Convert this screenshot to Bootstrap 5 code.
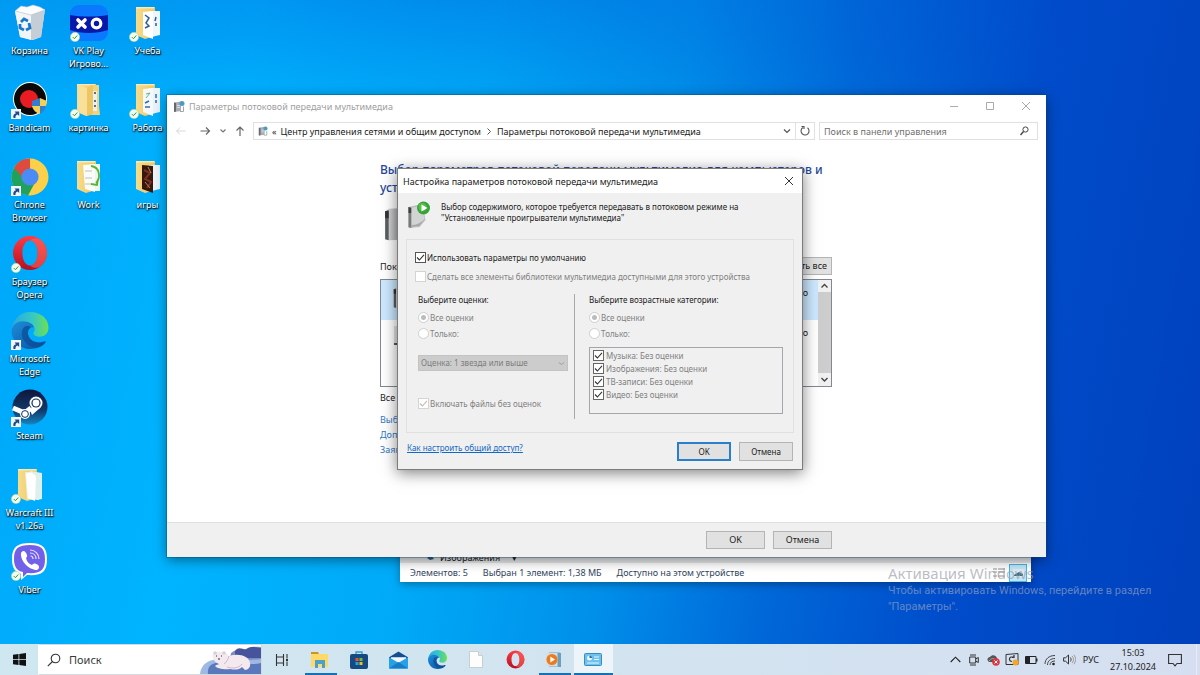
<!DOCTYPE html>
<html lang="ru">
<head>
<meta charset="utf-8">
<meta name="viewport" content="width=device-width, initial-scale=1">
<title>Рабочий стол</title>
<link href="https://cdn.jsdelivr.net/npm/bootstrap@5.3.0/dist/css/bootstrap.min.css" rel="stylesheet">
<style>
:root{--ui:"Noto Sans","Open Sans",sans-serif}
body{font-family:var(--ui);font-size:9px;line-height:13px;color:#1b1b1b;overflow:hidden}
svg{display:block;flex:none}
button,input,select{font-family:inherit}
.desktop{min-height:100vh;background:
 radial-gradient(ellipse 60% 22% at 38% -4%,rgba(0,60,200,.35),transparent),
 linear-gradient(100deg,#00a6f8 0%,#00b4ff 20%,#00aaf8 38%,#0090ea 53%,#0068d8 66%,#004cca 80%,#0040bc 100%)}
/* desktop shortcuts */
.shortcut{width:59px;height:77px;color:#fff;text-decoration:none;text-align:center;text-shadow:0 1px 2px #000,1px 1px 1px rgba(0,0,0,.8)}
.shortcut .pic{position:relative;width:38px;height:38px;margin:0 auto 2px}
.shortcut .mark-sm{position:absolute;left:0;bottom:0}
/* windows */
.win{position:absolute;background:#fff}
.w-back{left:400px;right:169px;top:540px;box-shadow:0 2px 8px rgba(0,0,0,.35)}
.w-main{left:167px;right:154px;top:95px;box-shadow:0 0 0 1px rgba(0,70,120,.35),0 3px 12px rgba(0,0,0,.45)}
.w-dialog{left:230px;top:73px;width:406px;border:1px solid #7c7c7c;background:#f0f0f0;box-shadow:0 3px 14px rgba(0,0,0,.5);font-size:8px;line-height:11px}
.capt{height:22px;color:#a0a0a0;padding:0 2px 0 6px}
.capbtn{width:36px;height:22px;border:0;padding:0;background:none;color:#999}
.navrow{height:28px}
.iconbtn{border:0;padding:0;background:none}
.box{height:18px;border:1px solid #e0e0e0}
.searchbox{width:219px}
.box input{border:0;outline:0;font-size:9px;padding:0}
.box input::placeholder{color:#6f6f6f;opacity:1}
.content{margin-left:213px;width:452px;height:377px}
.heading{font-size:12px;line-height:18px;color:#27479b;white-space:nowrap}
.devhead{margin:14px 0 4px}
.wbtn{height:18px;padding:0;border:1px solid #b4b4b4;background:#e1e1e1;font-size:9px;line-height:14px;color:#1b1b1b}
.footbar{background:#f0f0f0;border-top:1px solid #dfdfdf;height:35px;padding:8px 214px 0 0}
.w-58{width:59px}
.devlist{height:108px;border:1px solid #828790}
.devrow{height:40px;padding:6px 10px 0 8px}
.devrow.sel{background:#cce8ff}
.vscroll{width:13px;background:#f0f0f0}
.thumb{background:#cdcdcd}
.devlinks a{display:block;line-height:15px;color:#2f7ac4;text-decoration:none}
/* dialog */
.dtitle{height:24px;background:#fff;font-size:9px;padding-left:5px}
.groupbox{border:1px solid #e0e0e0;margin:10px 8px 0;height:194px;padding:12px 10px 0 8px}
.opt{height:11px;gap:1px}
.off{color:#808080}
.cb,.rb{appearance:none;margin:0;flex:none;width:11px;height:11px;background:#fff no-repeat center/9px;border:1px solid #555}
.cb:checked{background-image:url("data:image/svg+xml,%3Csvg xmlns='http://www.w3.org/2000/svg' viewBox='0 0 9 9'%3E%3Cpath d='M1 4.5 3.4 7 8 1.8' fill='none' stroke='%23333' stroke-width='1.1'/%3E%3C/svg%3E")}
.cb.dim{border-color:#d4d4d4}
.cb.dim:checked{background-image:url("data:image/svg+xml,%3Csvg xmlns='http://www.w3.org/2000/svg' viewBox='0 0 9 9'%3E%3Cpath d='M1 4.5 3.4 7 8 1.8' fill='none' stroke='%23bbb' stroke-width='1.1'/%3E%3C/svg%3E")}
.rb{border-radius:50%;border-color:#cfcfcf}
.rb:checked{background:radial-gradient(circle,#bcbcbc 0 2px,#fff 3px)}
.colL{width:161px;height:125px;padding-left:3px;border-right:1px solid #a9a9a9}
.colR{padding-left:14px}
.radios{display:flex;flex-direction:column;gap:5px;margin-top:7px}
.stars{width:150px;height:16px;margin:16px 0 27px;border:1px solid #c3c3c3;background:#ccc url("data:image/svg+xml,%3Csvg xmlns='http://www.w3.org/2000/svg' viewBox='0 0 8 8'%3E%3Cpath d='M1 3l3 2 3-2' fill='none' stroke='%23999'/%3E%3C/svg%3E") no-repeat right 2px center/7px;appearance:none;font-size:8px;line-height:12px;padding:0 2px;color:#7c7c7c;opacity:1}
.catlist{width:194px;height:67px;border:1px solid #a3a6ab;padding:1px 0 0 3px}
.catlist .opt{height:13px;gap:2px}
.catlist .cb{border-color:#666}
.dlg-foot{padding:9px 9px 8px 9px}
.dlg-foot .wbtn{width:54px;height:19px;font-size:8px}
.dlg-foot a{color:#1268c4}
.wbtn.primary{border:2px solid #2a7fcb}
/* status */
.statusbar{height:19px;color:#31445c;padding-left:10px;gap:15px}
.strip{height:23px;background:#e9ebec;padding:11px 0 0 26px;line-height:13px}
.viewon{width:18px;height:18px;background:#bfe6f8;border:1px solid #49b4e6}
/* activation notice */
.notice{position:absolute;left:888px;top:563px;width:280px;color:rgba(160,172,196,.62);pointer-events:none;font-family:Roboto,sans-serif;font-size:11px;line-height:16px}
.notice h2{font-family:var(--ui);font-size:15px;line-height:20px;font-weight:400;margin:0;color:rgba(150,155,165,.66)}
/* taskbar */
.taskbar{position:absolute;left:0;right:0;bottom:0;height:31px;background:linear-gradient(90deg,#cfe7f1,#d2e4ef 50%,#d5dff1)}
.start{width:38px;border:0;background:none;padding:0}
.search{width:224px;background:#fff;border:1px solid #d4dadd;border-left-color:#fff}
.search input{border:0;outline:0;font-size:11px;width:100px;padding:0}
.search input::placeholder{color:#3a3a3a;opacity:1}
.app{width:39px;height:31px;border:0;background:none;padding:0 1px 0 0;position:relative}
.app.run::after{content:"";position:absolute;left:4px;right:3px;bottom:0;height:2px;background:#1470b8}
.app.act{background:#edf5fa}
.app.act::after{left:0;right:0}
.tray{color:#222;font-size:9px}
.tray .slot{width:19px;border:0;background:none;padding:0;color:#222}
.tray time{line-height:14px;margin:0 12px 0 11px}
.peek{width:4px;margin-left:14px}
</style>
</head>
<body>
<svg width="0" height="0" class="position-absolute" aria-hidden="true">
 <defs>
  <linearGradient id="gFold" x1="0" x2="1"><stop offset="0" stop-color="#f7dc8b"/><stop offset="1" stop-color="#efc75e"/></linearGradient>
  <linearGradient id="gOp" x1="0" y1="0" x2="0" y2="1"><stop offset="0" stop-color="#ff3b45"/><stop offset="1" stop-color="#b50f20"/></linearGradient>
  <linearGradient id="gE1" x1="0" y1="0" x2="1" y2="0"><stop offset="0" stop-color="#28a8e0"/><stop offset=".55" stop-color="#35c7c8"/><stop offset="1" stop-color="#6fe04f"/></linearGradient>
  <linearGradient id="gE2" x1="0" y1="0" x2="1" y2="1"><stop offset="0" stop-color="#1b8fdb"/><stop offset="1" stop-color="#0b4f9e"/></linearGradient>
  <linearGradient id="gSt" x1="0" y1="0" x2="0" y2="1"><stop offset="0" stop-color="#10163c"/><stop offset=".6" stop-color="#103a6c"/><stop offset="1" stop-color="#1585c2"/></linearGradient>
  <linearGradient id="gDev" x1="0" x2="1"><stop offset="0" stop-color="#e2e3e3"/><stop offset="1" stop-color="#7e8081"/></linearGradient>
  <symbol id="ok" viewBox="0 0 10 10"><circle cx="5" cy="5" r="4.7" fill="#f3fbef" stroke="#9fcf8f" stroke-width=".5"/><path d="M2.8 5.1 4.4 6.7 7.3 3.5" fill="none" stroke="#2f9a3d" stroke-width="1"/></symbol>
  <symbol id="lnk" viewBox="0 0 10 10"><path d="M0 0h10v10H0z" fill="#f2f6fb"/><path d="M2.4 9C1.900 6 3 4.600 5 4.200L3.600 2.500H8.200V7L6.600 5.500C4.900 6 4.300 7.200 4.500 9z" fill="#1f4a8a"/></symbol>
  <symbol id="folder" viewBox="0 0 38 38"><path d="M7 3h19v29l-10 3-9-4z" fill="url(#gFold)"/><path d="M7 3h18v1.500H7z" fill="#fbe9ae"/></symbol>
  <symbol id="opera" viewBox="0 0 36 36"><path fill="url(#gOp)" fill-rule="evenodd" d="M18 1a17 17 0 1 0 0 34 17 17 0 0 0 0-34zm0 4.500c4.600 0 7.600 5.500 7.600 12.500S22.600 30.500 18 30.500 10.400 25 10.400 18 13.400 5.500 18 5.500z"/><path d="M18 5.500c3-3 8-3 11-.500 8 7 8 19 0 26-3 2.500-8 2.500-11-.500 4.600 0 7.600-5.500 7.600-12.500S22.600 5.500 18 5.500z" fill="#ff6a5e" opacity=".55"/></symbol>
  <symbol id="edge" viewBox="0 0 36 36"><path d="M0 18C1 7 9 0 18 0c11 0 18 7 18 15 0 6-4 9-9 9-4 0-7-2-5-5 1.500-2 0-5-2-7-5-4-16-3-20 6z" fill="url(#gE1)"/><path d="M0 18c1-6 6-9 11-9 6 0 10 3 11 6-3-1-6 1-6 5 0 7 7 11 14 9 3-1 4-1 3 1-3 4-9 6-15 6C8 36 0 28 0 18z" fill="url(#gE2)"/><path d="M13 14c-4 3-4 10 0 15 3 4 8 6 12 5 4-1 7-3 8-5-5 3-16 1-17-8 0-3 1-5 3-6-1-1-3-2-6-1z" fill="#0d4c96" opacity=".7"/></symbol>
  <symbol id="server" viewBox="0 0 24 30"><path d="M1 4 4 2l18-1v27L5 29l-4-1z" fill="url(#gDev)"/><path d="M1 4 4 3v26l-3-1z" fill="#5b5d5f"/><path d="M1 4h3v6H1z" fill="#333"/></symbol>
  <symbol id="stream" viewBox="0 0 12 12"><path d="M1 2 8 1v9.500L1 11.500z" fill="#a9adb1"/><path d="M1 2l2 .5V11l-2 .5z" fill="#66696d"/><path d="M4 5h3M4 7h3" stroke="#eef" stroke-width=".7"/><circle cx="9" cy="3" r="2.500" fill="#4b9dc0"/><path d="M7 11h3.500V6" fill="none" stroke="#9aa6ae"/></symbol>
 </defs>
</svg>

<main class="desktop position-relative overflow-hidden">
 <nav class="d-flex pt-1" aria-label="Ярлыки">
  <div>
   <a class="shortcut d-block" href="#"><div class="pic"><svg width="38" height="38" viewBox="0 0 38 38"><path d="M4 7 34 5 30 33 22 36 9 33z" fill="#dfe5ea"/><path d="M4 7 20 9 20 36 9 33z" fill="#f2f5f7"/><path d="M20 9 34 5 30 33 20 36z" fill="#c5ced6"/><path d="M4 7l6-5 6 1 6-2 7 2 5 3-14 5z" fill="#fafcfd" stroke="#b4bfc8" stroke-width=".6"/><path d="M10 18l3-3 4 2M18 19l1 5-4 2M13 26l-4-2 0-4" fill="none" stroke="#1b78c8" stroke-width="2.800"/></svg></div>Корзина</a>
   <a class="shortcut d-block" href="#"><div class="pic"><svg width="38" height="38" viewBox="0 0 38 38"><circle cx="19" cy="18" r="17" fill="#fff"/><circle cx="19" cy="18" r="16" fill="#090909"/><circle cx="18" cy="18" r="9" fill="#e81c22"/><path d="M21 20l8-3v8h-8z" fill="#2f7fd0"/><path d="M29 17l7 3-1 5h-6z" fill="#f6cf56"/><path d="M21 25h8v8c-4-1-7-4-8-8z" fill="#f6cf56"/><path d="M29 25h6c-1 4-3 6-6 8z" fill="#2f7fd0"/></svg><svg class="mark-sm" width="10" height="10"><use href="#lnk"/></svg></div>Bandicam</a>
   <a class="shortcut d-block" href="#"><div class="pic"><svg width="38" height="38" viewBox="0 0 38 38"><circle cx="19" cy="19" r="18.500" fill="#fdd04a"/><path d="M3 9.700A18.500 18.500 0 0 0 17 37.500l7-13-5-5.500z" fill="#20a15c"/><path d="M3 9.700A18.500 18.500 0 0 1 19 .500V11l-6 10z" fill="#dd4b3e"/><circle cx="19" cy="19" r="8.600" fill="#4a8bf5"/></svg><svg class="mark-sm" width="10" height="10"><use href="#lnk"/></svg></div>Chrone<br>Browser</a>
   <a class="shortcut d-block" href="#"><div class="pic"><svg width="38" height="36"><use href="#opera"/></svg><svg class="mark-sm" width="10" height="10"><use href="#ok"/></svg></div>Браузер<br>Opera</a>
   <a class="shortcut d-block" href="#"><div class="pic"><svg width="38" height="37"><use href="#edge"/></svg><svg class="mark-sm" width="10" height="10"><use href="#lnk"/></svg></div>Microsoft<br>Edge</a>
   <a class="shortcut d-block" href="#"><div class="pic"><svg width="38" height="38" viewBox="0 0 38 38"><circle cx="19" cy="18" r="17.500" fill="url(#gSt)"/><path d="M2 19l12 5 6-5" fill="none" stroke="#fff" stroke-width="5"/><circle cx="14" cy="25" r="5" fill="#fff"/><path d="M19 21l5-7 5 5-8 7z" fill="#fff"/><circle cx="25" cy="14" r="6.500" fill="#fff"/><circle cx="25" cy="14" r="4.600" fill="#12305f"/><circle cx="25" cy="14" r="3.400" fill="#fff"/><circle cx="14" cy="25" r="3.400" fill="#fff" stroke="#12305f"/></svg><svg class="mark-sm" width="10" height="10"><use href="#lnk"/></svg></div>Steam</a>
   <a class="shortcut d-block" href="#"><div class="pic"><svg width="38" height="38" viewBox="0 0 38 38"><use href="#folder"/><path d="M14 6l14 1v27l-12-1z" fill="#e7f1e4"/><path d="M19 5l12 2v26l-5 1z" fill="#ddf0ee"/><path d="M15 8c4-3 8-1 10 3l-1 24-7-3z" fill="#fff"/></svg><svg class="mark-sm" width="10" height="10"><use href="#ok"/></svg></div>Warcraft III<br>v1.26a</a>
   <a class="shortcut d-block" href="#"><div class="pic"><svg width="38" height="38" viewBox="0 0 38 38"><path d="M19 0C6 0 1 4 1 16c0 9 3 13 9 15v6l6-5c15 1 20-3 20-16C36 4 31 0 19 0z" fill="#fff"/><path d="M19 2C7 2 3 5.500 3 16c0 8 3 12 9 13v5l4-4c14 1 18-3 18-14C34 5.500 30 2 19 2z" fill="#7360e8"/><path d="M10 10c2-3 4-2 5 0 2 3 1 4 0 5 1 4 3 6 6 7 2-2 3-2 6 0 2 2 1 4-1 5-8 0-17-9-16-17z" fill="#fff"/><path d="M19 7c5 0 9 4 9 9M19 10c4 0 6 3 6 6M19.500 13c2 0 2.500 1 2.500 3" fill="none" stroke="#e6e0ff" stroke-width="1.200"/></svg><svg class="mark-sm" width="10" height="10"><use href="#ok"/></svg></div>Viber</a>
  </div>
  <div>
   <a class="shortcut d-block" href="#"><div class="pic"><svg width="38" height="38" viewBox="0 0 38 38"><rect y="1" width="38" height="36" rx="9" fill="#0a78ff"/><path d="M0 11c12 2 26 2 38 0v15c-12 4-26 4-38 0z" fill="#0818a8"/><path d="M8 16l7 7M15 16l-7 7" stroke="#fff" stroke-width="3.600" stroke-linecap="round"/><circle cx="26.500" cy="19.500" r="4.300" fill="none" stroke="#fff" stroke-width="3.200"/></svg><svg class="mark-sm" width="10" height="10"><use href="#ok"/></svg></div>VK Play<br>Игрово...</a>
   <a class="shortcut d-block" href="#"><div class="pic"><svg width="38" height="38" viewBox="0 0 38 38"><use href="#folder"/><path d="M20 4h9v20l1 10H20z" fill="#f2d27d"/><path d="M23 10h4v20h-4z" fill="#e9eff2"/><path d="M24 12h2M24 20h2M24 25h2" stroke="#345" stroke-width="1.500"/><path d="M8 3l9 4v28l-9-4z" fill="#f8e09a"/><path d="M17 7l6-3v29l-6 2z" fill="#edc662"/></svg><svg class="mark-sm" width="10" height="10"><use href="#ok"/></svg></div>картинка</a>
   <a class="shortcut d-block" href="#"><div class="pic"><svg width="38" height="38" viewBox="0 0 38 38"><use href="#folder"/><path d="M21 6h9v27h-9z" fill="#eef5f1"/><path d="M13 7l12-1v28l-10-3z" fill="#fafcfa"/><path d="M15 13h7M15 20h7M15 26h6" stroke="#b9c2bd"/><path d="M21 8c9 1 10 12 5 17M28 21l-1 6-6-1" fill="none" stroke="#59b436" stroke-width="1.800"/></svg></div>Work</a>
  </div>
  <div>
   <a class="shortcut d-block" href="#"><div class="pic"><svg width="38" height="38" viewBox="0 0 38 38"><use href="#folder"/><path d="M20 7h11v24l-9 2z" fill="#eef5fb"/><path d="M14 8l10-1v28l-10-4z" fill="#fff"/><path d="M16 11l4 3-3 5 3 3-4 2M27 13l-1 4M27 19v3" stroke="#2d5e98" stroke-width="1.500" fill="none"/></svg><svg class="mark-sm" width="10" height="10"><use href="#ok"/></svg></div>Учеба</a>
   <a class="shortcut d-block" href="#"><div class="pic"><svg width="38" height="38" viewBox="0 0 38 38"><use href="#folder"/><path d="M20 7h11v24l-9 2z" fill="#eaf3fb"/><path d="M14 8l10-1v28l-10-4z" fill="#f4f8fb"/><path d="M17 13l4-1-4 5" stroke="#64b582" fill="none"/><path d="M16 22l4-2M16 26h5M27 13v4M27 19v3" stroke="#2d6eb0" stroke-width="1.500"/></svg><svg class="mark-sm" width="10" height="10"><use href="#ok"/></svg></div>Работа</a>
   <a class="shortcut d-block" href="#"><div class="pic"><svg width="38" height="38" viewBox="0 0 38 38"><use href="#folder"/><path d="M20 7h11v24l-9 2z" fill="#eef3f7"/><path d="M13 7l11 1v27l-11-4z" fill="#34180f"/><path d="M15 12l6 3-5 6 6 3-4 6" fill="none" stroke="#7d3020" stroke-width="2"/><path d="M19 9l3 6M16 24l5 6" stroke="#b5835a"/></svg></div>игры</a>
  </div>
 </nav>

 <section class="win w-back" aria-label="Проводник">
  <div class="strip d-flex gap-1"><svg width="10" height="12" viewBox="0 0 10 12"><path d="M1 7l4-3 3 4-4 1z" fill="#345d80"/></svg><span class="text-nowrap">Изображения</span><span class="ps-2">▾</span></div>
  <div class="statusbar d-flex align-items-center"><span>Элементов: 5</span><span>Выбран 1 элемент: 1,38 МБ</span><span>Доступно на этом устройстве</span>
   <span class="ms-auto d-flex align-items-center gap-1 pe-1"><svg width="12" height="10" viewBox="0 0 12 10"><path d="M0 1h4M5 1h7M0 4h4M5 4h7M0 8h4M5 8h7" stroke="#8d8d8d"/></svg><span class="viewon d-flex align-items-center justify-content-center"><svg width="11" height="8" viewBox="0 0 11 8"><path d="M0 0h11v8H0z" fill="#dfeaf2"/><path d="M1 6l5-3 4 2v2H1z" fill="#3b6d84"/></svg></span></span></div>
 </section>

 <section class="win w-main" aria-label="Параметры потоковой передачи">
  <header class="capt d-flex align-items-center"><svg width="12" height="13"><use href="#stream"/></svg><span class="ms-1 me-auto">Параметры потоковой передачи мультимедиа</span>
   <button class="capbtn" aria-label="Свернуть"><svg class="mx-auto" width="10" height="10" viewBox="0 0 10 10"><path d="M1 5.500h8" stroke="#aaa"/></svg></button>
   <button class="capbtn" aria-label="Развернуть"><svg class="mx-auto" width="10" height="10" viewBox="0 0 10 10"><path d="M1.500 1.500h7v7h-7z" fill="none" stroke="#aaa"/></svg></button>
   <button class="capbtn" aria-label="Закрыть"><svg class="mx-auto" width="10" height="10" viewBox="0 0 10 10"><path d="M1 1l8 8M9 1 1 9" stroke="#aaa"/></svg></button></header>
  <div class="navrow d-flex align-items-center px-2">
   <div class="d-flex align-items-center gap-2 me-2">
    <button class="iconbtn" aria-label="Назад"><svg width="12" height="10" viewBox="0 0 11 10"><path d="M10 5H1M4.500 1.500 1 5l3.500 3.500" fill="none" stroke="#d8d8d8"/></svg></button>
    <button class="iconbtn ms-1" aria-label="Вперёд"><svg width="12" height="10" viewBox="0 0 11 10"><path d="M1 5h9M6.500 1.500 10 5 6.500 8.500" fill="none" stroke="#666" stroke-width="1.200"/></svg></button>
    <button class="iconbtn" aria-label="Журнал"><svg width="8" height="6" viewBox="0 0 8 6"><path d="M1.500 1.500 4 4l2.500-2.500" fill="none" stroke="#777" stroke-width="1.200"/></svg></button>
    <button class="iconbtn" aria-label="Вверх"><svg width="10" height="11" viewBox="0 0 10 11"><path d="M5 10V1M1.500 4.500 5 1l3.500 3.500" fill="none" stroke="#666" stroke-width="1.200"/></svg></button>
   </div>
   <div class="box d-flex align-items-center flex-grow-1">
    <svg class="mx-1" width="10" height="12"><use href="#stream"/></svg><span class="me-1">«</span><span>Центр управления сетями и общим доступом</span><svg class="mx-1" width="8" height="7" viewBox="0 0 4 7"><path d="M.500.500 3.500 3.500.500 6.500" fill="none" stroke="#555"/></svg><span>Параметры потоковой передачи мультимедиа</span>
    <svg class="ms-auto" width="8" height="6" viewBox="0 0 8 6"><path d="M1 1.500l3 3 3-3" fill="none" stroke="#555" stroke-width="1.200"/></svg>
    <button class="iconbtn border-start ms-1 ps-1" aria-label="Обновить"><svg class="me-1" width="10" height="16" viewBox="0 0 10 16"><path d="M3 4.500a4 4 0 1 0 4.500.300M1.500 3.500h2.500V6" fill="none" stroke="#555" stroke-width="1.100"/></svg></button>
   </div>
   <div class="box searchbox d-flex align-items-center ms-1 ps-1 pe-2"><input class="flex-grow-1" aria-label="Поиск" placeholder="Поиск в панели управления"><svg width="9" height="10" viewBox="0 0 9 10"><circle cx="5.500" cy="3.500" r="2.600" fill="none" stroke="#444"/><path d="M3.500 5.500.500 9" stroke="#444" stroke-width="1.400"/></svg></div>
  </div>
  <div class="content pt-3">
   <h1 class="heading m-0">Выбор параметров потоковой передачи мультимедиа для компьютеров и<br>устройств</h1>
   <svg class="ms-1 mt-2 mb-1" width="28" height="38"><use href="#server"/></svg>
   <div class="devhead d-flex align-items-center justify-content-between"><span>Показать</span><button class="wbtn px-1">Разрешить все</button></div>
   <div class="devlist d-flex">
    <div class="flex-grow-1">
     <div class="devrow sel d-flex justify-content-between"><svg class="ms-1" width="18" height="23"><use href="#server"/></svg><span>Разрешено</span></div>
     <div class="devrow d-flex justify-content-between"><svg class="ms-1" width="18" height="20" viewBox="0 0 18 20"><path d="M1 0h15v18H1z" fill="#dfe1e3"/><path d="M1 18h16" stroke="#555" stroke-width="2"/></svg><span>Разрешено</span></div>
    </div>
    <div class="vscroll d-flex flex-column align-items-center"><svg width="13" height="12" viewBox="0 0 13 12"><path d="M3.500 7.500l3-3 3 3" fill="none" stroke="#444" stroke-width="1.400"/></svg><div class="thumb flex-grow-1 w-100"></div><svg width="13" height="13" viewBox="0 0 13 13"><path d="M3.500 5l3 3 3-3" fill="none" stroke="#444" stroke-width="1.400"/></svg></div>
   </div>
   <p class="mt-1 mb-2">Все</p>
   <div class="devlinks"><a href="#">Выбор</a><a href="#">Дополн</a><a href="#">Заявл</a></div>
  </div>
  <footer class="footbar d-flex justify-content-end gap-2"><button class="wbtn w-58">OK</button><button class="wbtn w-58">Отмена</button></footer>

  <section class="win w-dialog" role="dialog" aria-labelledby="dlgTitle">
   <header class="dtitle d-flex align-items-center justify-content-between"><span id="dlgTitle">Настройка параметров потоковой передачи мультимедиа</span><button class="iconbtn px-2" aria-label="Закрыть"><svg width="10" height="10" viewBox="0 0 10 10"><path d="M1 1l8 8M9 1 1 9" stroke="#333"/></svg></button></header>
   <div class="d-flex align-items-start pt-2 ps-2">
    <svg width="27" height="28" viewBox="0 0 26 28"><path d="M2 6 16 3l3 16-6 7-11 1z" fill="#b9bbbc"/><path d="M2 6l3 1v20l-3-1z" fill="#77797b"/><path d="M2 6l3 1v5H2z" fill="#3d3f41"/><path d="M5 7l11-3 2 14-5 7-8 1z" fill="#d2d3d3"/><path d="M5 24c5 0 9-2 13-6l-5 7-8 1z" fill="#a7a9aa"/><circle cx="17" cy="7" r="6.500" fill="#35a537"/><circle cx="16" cy="6" r="4" fill="#6fcb5a" opacity=".6"/><path d="M15 3.500 21 7l-6 3.500z" fill="#fff"/></svg>
    <p class="mb-0 ms-2">Выбор содержимого, которое требуется передавать в потоковом режиме на<br>"Установленные проигрыватели мультимедиа"</p>
   </div>
   <div class="groupbox">
    <div class="opt d-flex align-items-center"><input class="cb" type="checkbox" id="c1" checked><label for="c1">Использовать параметры по умолчанию</label></div>
    <div class="opt d-flex align-items-center off mt-2"><input class="cb dim" type="checkbox" id="c2" disabled><label for="c2">Сделать все элементы библиотеки мультимедиа доступными для этого устройства</label></div>
    <div class="d-flex pt-2 mt-1">
     <div class="colL">
      <div>Выберите оценки:</div>
      <div class="radios off">
       <div class="opt d-flex align-items-center"><input class="rb" type="radio" name="r1" id="r1" checked disabled><label for="r1">Все оценки</label></div>
       <div class="opt d-flex align-items-center"><input class="rb" type="radio" name="r1" id="r2" disabled><label for="r2">Только:</label></div>
      </div>
      <select class="stars d-block" aria-label="Оценка" disabled><option>Оценка: 1 звезда или выше</option></select>
      <div class="opt d-flex align-items-center off"><input class="cb dim" type="checkbox" id="c3" checked disabled><label for="c3">Включать файлы без оценок</label></div>
     </div>
     <div class="colR">
      <div>Выберите возрастные категории:</div>
      <div class="radios off">
       <div class="opt d-flex align-items-center"><input class="rb" type="radio" name="r2" id="r3" checked disabled><label for="r3">Все оценки</label></div>
       <div class="opt d-flex align-items-center"><input class="rb" type="radio" name="r2" id="r4" disabled><label for="r4">Только:</label></div>
      </div>
      <div class="catlist off mt-2">
       <div class="opt d-flex align-items-center"><input class="cb" type="checkbox" id="k1" checked><label for="k1">Музыка: Без оценки</label></div>
       <div class="opt d-flex align-items-center"><input class="cb" type="checkbox" id="k2" checked><label for="k2">Изображения: Без оценки</label></div>
       <div class="opt d-flex align-items-center"><input class="cb" type="checkbox" id="k3" checked><label for="k3">ТВ-записи: Без оценки</label></div>
       <div class="opt d-flex align-items-center"><input class="cb" type="checkbox" id="k4" checked><label for="k4">Видео: Без оценки</label></div>
      </div>
     </div>
    </div>
   </div>
   <footer class="dlg-foot d-flex align-items-start"><a class="me-auto" href="#">Как настроить общий доступ?</a><button class="wbtn primary me-2">OK</button><button class="wbtn">Отмена</button></footer>
  </section>
 </section>

 <aside class="notice"><h2>Активация Windows</h2>Чтобы активировать Windows, перейдите в раздел<br>"Параметры".</aside>

 <footer class="taskbar d-flex">
  <button class="start" aria-label="Пуск"><svg class="mx-auto" width="13" height="13" viewBox="0 0 13 13"><path d="M0 1.800 5.500 1v5H0zM6.300.900 13 0v6H6.300zM0 6.800h5.500V12L0 11.200zM6.300 6.800H13V13l-6.700-.900z" fill="#111"/></svg></button>
  <div class="search d-flex align-items-center ps-2"><svg width="14" height="14" viewBox="0 0 14 14"><circle cx="8.500" cy="5.500" r="4.300" fill="none" stroke="#333" stroke-width="1.100"/><path d="M5.500 8.500.800 13.200" stroke="#333" stroke-width="1.100"/></svg><input class="ms-2" aria-label="Поиск" placeholder="Поиск">
   <svg class="ms-auto" width="62" height="29" viewBox="0 0 62 29"><path d="M32 8c6-5 10-2 15-4 5-3 10-2 15-2v27H28z" fill="#7d8cc6"/><path d="M36 6c4-6 9 0 12-2 5-4 9-1 14-1v10H36z" fill="#46559b"/><path d="M1 29C2 19 10 14 22 14c15 0 28 2 40 0v15z" fill="#9db9e4"/><path d="M9 29C8 20 14 17 26 17c14 0 24 4 36 1v11z" fill="#5b78bd"/><path d="M14 13c-2-5 3-7 7-6 5-1 7 2 9 4 10-3 20 0 21 7 1 4-2 7-5 7l-3-3c-3 3-7 3-12 2-6 1-14-1-15-3 2-2 4-1 4-2-3-1-5-3-6-6z" fill="#f4e9ee"/><path d="M28 22c6 2 12 1 15-3M30 11c-1 3-2 6-5 8" fill="none" stroke="#cbb8cf"/><circle cx="16" cy="8" r="1.800" fill="#dccfdd"/><circle cx="25" cy="8" r="1.800" fill="#dccfdd"/><path d="M17 11h1M22 11h1M19 14h2" stroke="#333"/></svg></div>
  <div class="d-flex">
  <button class="app" aria-label="Представление задач"><svg class="mx-auto" width="13" height="12" viewBox="0 0 13 12"><path d="M1.500 0v3h7V0M1.500 12V9h7v3M1.500 3v6M8.500 3v6M12 0v4.500M12 7.500V12" fill="none" stroke="#333" stroke-width="1.100"/><path d="M11 5h2v2h-2z" fill="#333"/></svg></button>
  <button class="app run" aria-label="Проводник"><svg class="mx-auto" width="18" height="16" viewBox="0 0 18 16"><path d="M0 0h7l1 2h-8z" fill="#c99526"/><path d="M0 2h17v13H0z" fill="#ffd965"/><path d="M4 16V8h10v8h-3v-4H7v4z" fill="#4c9fc9"/></svg></button>
  <button class="app" aria-label="Магазин"><svg class="mx-auto" width="18" height="18" viewBox="0 0 18 18"><path d="M6 4V1h6v3" fill="none" stroke="#2c9ada" stroke-width="1.300"/><rect y="3" width="18" height="15" rx="2" fill="#164a83"/><path d="M5.500 7h3v3h-3z" fill="#f05030"/><path d="M9.500 7h3v3h-3z" fill="#7cba2a"/><path d="M5.500 11h3v3h-3z" fill="#1ba4e8"/><path d="M9.500 11h3v3h-3z" fill="#fbbc18"/></svg></button>
  <button class="app" aria-label="Почта"><svg class="mx-auto" width="19" height="18" viewBox="0 0 20 18"><path d="M0 6 10 0l10 6v3H0z" fill="#154f92"/><path d="M2 6h16v5l-8 3-8-3z" fill="#f3f8fc"/><path d="M0 6l10 6 10-6v12H0z" fill="#26a0e6"/><path d="M0 18l10-7 10 7z" fill="#147cc8"/></svg></button>
  <button class="app" aria-label="Edge"><svg class="mx-auto" width="19" height="19"><use href="#edge"/></svg></button>
  <button class="app" aria-label="Документ"><svg class="mx-auto" width="14" height="17" viewBox="0 0 14 17"><path d="M.500.500h9l4 4v12H.500z" fill="#fdfdfd" stroke="#c9cdd0"/><path d="M9.500.500v4h4" fill="#e4e6e8" stroke="#c9cdd0"/></svg></button>
  <button class="app" aria-label="Opera"><svg class="mx-auto" width="19" height="19"><use href="#opera"/></svg></button>
  <button class="app run" aria-label="Проигрыватель"><svg class="mx-auto" width="16" height="17" viewBox="0 0 16 17"><path d="M3 1h11l1 15H3z" fill="#9ac4dc"/><path d="M12 2h3v14h-3z" fill="#6a9fbe"/><path d="M0 2h11v13H0z" fill="#d6dde2"/><circle cx="6" cy="8.500" r="5.500" fill="#ee7a1c"/><path d="M4.300 5.500 9 8.500l-4.700 3z" fill="#fff"/></svg></button>
  <button class="app run act" aria-label="Панель управления"><svg class="mx-auto" width="18" height="13" viewBox="0 0 18 13"><rect x=".500" y=".500" width="17" height="12" rx="1" fill="#6cc1ee" stroke="#3a8dbd"/><circle cx="5.500" cy="5" r="2.500" fill="#e9f7ff"/><path d="M5.500 5V2.500A2.500 2.500 0 0 1 8 5z" fill="#1f6fa8"/><path d="M10 4h5M10 6.500h5M3 10h12" stroke="#e9f7ff"/></svg></button>
  </div>
  <div class="tray ms-auto d-flex align-items-center">
   <button class="slot" aria-label="Скрытые значки"><svg class="mx-auto" width="11" height="7" viewBox="0 0 11 7"><path d="M.700 6 5.500 1.200 10.300 6" fill="none" stroke="#222" stroke-width="1.100"/></svg></button>
   <button class="slot" aria-label="Камера"><svg class="mx-auto" width="10" height="12" viewBox="0 0 10 12"><path d="M.700 3h6v6h-6zM6.700 5l2.600-1.500v5L6.700 7M1 1h6M1 11h6" fill="none" stroke="#333"/></svg></button>
   <button class="slot" aria-label="Облако"><svg class="mx-auto" width="13" height="12" viewBox="0 0 13 12"><path d="M2 8C-1 6 1 3 3 3c2-3 6-2 7 1l1 4z" fill="#555"/><path d="M2 7c2-3 5-3 7-1" stroke="#aaa" fill="none"/><circle cx="9" cy="8" r="3.800" fill="#e03440"/><path d="M7.500 6.500l3 3M10.500 6.500l-3 3" stroke="#fff"/></svg></button>
   <button class="slot" aria-label="Обновление"><svg class="mx-auto" width="14" height="13" viewBox="0 0 14 13"><path d="M1 1.500 13 .500v11H1z" fill="none" stroke="#333"/><path d="M9 4H6C3.500 5 4 8.500 7 8.500M9 2v2.500H7" fill="none" stroke="#333" stroke-width="1.200"/><circle cx="10.500" cy="9.500" r="3" fill="#f5a52a"/></svg></button>
   <button class="slot" aria-label="Батарея"><svg class="mx-auto" width="13" height="8" viewBox="0 0 13 8"><path d="M.500.500h10.500v7H.500z" fill="none" stroke="#222"/><path d="M1 1h4v6H1zM11 2.500h1.500v3H11z" fill="#222"/></svg></button>
   <button class="slot" aria-label="Сеть"><svg class="mx-auto" width="12" height="12" viewBox="0 0 12 12"><path d="M1 10C1 5 5 1.500 11 1.500M3.500 11c0-4 3-6.500 7.500-6.500M6 11c0-2.500 2-4 5-4" fill="none" stroke="#444"/><circle cx="9.500" cy="10" r="1.300" fill="#222"/></svg></button>
   <button class="slot" aria-label="Звук"><svg class="mx-auto" width="13" height="11" viewBox="0 0 13 11"><path d="M.600 3.800h2L5.500 1v9L2.600 7.200h-2z" fill="none" stroke="#333"/><path d="M7.300 3.500c1 1.200 1 2.800 0 4" fill="none" stroke="#333"/><path d="M9 2c2 2 2 5 0 7M10.800.800c2.400 3 2.400 6.400 0 9.400" fill="none" stroke="#999"/></svg></button>
   <span class="ms-1">РУС</span>
   <time class="text-center">15:03<br>27.10.2024</time>
   <button class="iconbtn" aria-label="Уведомления"><svg width="14" height="14" viewBox="0 0 14 14"><path d="M.600 1.500h12.800v9H9L7 12.800 5 10.500H.600z" fill="none" stroke="#333" stroke-width="1.100"/></svg></button>
   <span class="peek border-start border-secondary-subtle align-self-stretch"></span>
  </div>
 </footer>
</main>
<script src="https://cdn.jsdelivr.net/npm/bootstrap@5.3.0/dist/js/bootstrap.bundle.min.js"></script>
</body>
</html>
